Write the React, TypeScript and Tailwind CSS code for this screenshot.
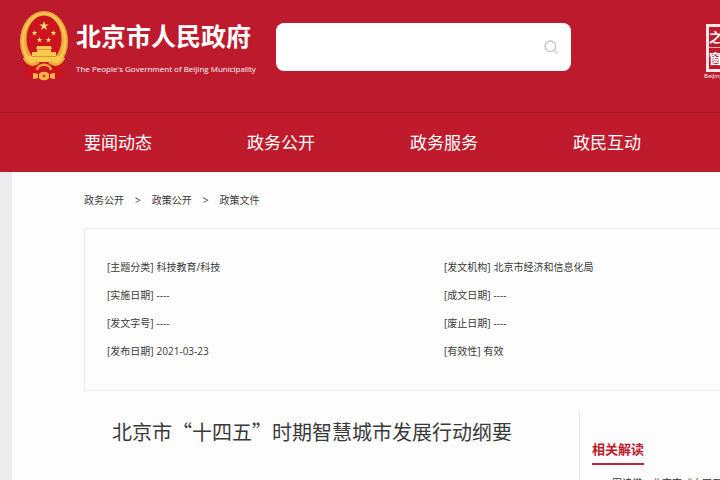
import { Search } from "lucide-react";

interface MetaItem {
  label: string;
  value: string;
}

const navItems = ["要闻动态", "政务公开", "政务服务", "政民互动"];

const crumbs = ["政务公开", "政策公开", "政策文件"];

const leftMeta: MetaItem[] = [
  { label: "主题分类", value: "科技教育/科技" },
  { label: "实施日期", value: "----" },
  { label: "发文字号", value: "----" },
  { label: "发布日期", value: "2021-03-23" },
];

const rightMeta: MetaItem[] = [
  { label: "发文机构", value: "北京市经济和信息化局" },
  { label: "成文日期", value: "----" },
  { label: "废止日期", value: "----" },
  { label: "有效性", value: "有效" },
];

function Star({ x, y, r }: { x: number; y: number; r: number }) {
  return (
    <path
      transform={`translate(${x} ${y}) scale(${r})`}
      fill="#f9d56b"
      d="M0-1 .24-.32.95-.31.38.12.59.81 0 .4-.59.81-.38.12-.95-.31-.24-.32Z"
    />
  );
}

function Emblem() {
  return (
    <svg viewBox="0 0 48 70" className="h-[70px] w-12 shrink-0" aria-hidden="true">
      {/* Wheat ring */}
      <ellipse cx="24" cy="30" rx="24" ry="30" fill="#eda83a" />
      <ellipse cx="24" cy="30" rx="21" ry="27" fill="none" stroke="#f6c653" strokeWidth="2.5" />
      <ellipse cx="24" cy="28" rx="17.5" ry="23.5" fill="#cb1420" />
      <Star x={24} y={15} r={5} />
      <Star x={14.5} y={22} r={3} />
      <Star x={33.5} y={22} r={3} />
      <Star x={19.5} y={29} r={3} />
      <Star x={28.5} y={29} r={3} />
      {/* Gate */}
      <path fill="#f9c84e" d="M17 35h14l1 3h-1v3h5v4h7c-1 5-3 8-6 9H11c-3-1-5-4-6-9h7v-4h5v-3h-1Z" />
      <path stroke="#d98a24" strokeWidth="0.8" d="M17 38.5h14M12 45.5h24" />
      {/* Ribbon and gear */}
      <path fill="#cb1420" d="M5 49c4 5 8 5 12 2h14c4 3 8 3 12-2l-1 17-5 2-6-3H17l-6 3-5-2Z" />
      <path fill="none" stroke="#eda83a" strokeWidth="2.5" d="M4 47c4 8 10 8 15 4M44 47c-4 8-10 8-15 4" />
      <path fill="none" stroke="#eda83a" strokeWidth="2.5" d="M17 59c1-7 13-7 14 0" />
      <path fill="#f3b848" d="m13 62 6 1c2-3 8-3 10 0l6-1v6l-6-1c-2 3-8 3-10 0l-6 1Z" />
      <path stroke="#cb1420" strokeWidth="1.2" d="M18.5 63v4M29.5 63v4" />
      <circle cx="24" cy="65" r="1.5" fill="#c9571d" />
    </svg>
  );
}

function MetaList({ items }: { items: MetaItem[] }) {
  return (
    <dl className="flex w-[337px] shrink-0 flex-col">
      {items.map((item) => (
        <div key={item.label} className="flex h-7 items-center gap-[3px]">
          <dt>[{item.label}]</dt>
          <dd>{item.value}</dd>
        </div>
      ))}
    </dl>
  );
}

export default function App() {
  return (
    <div className="flex h-screen flex-col overflow-hidden bg-[#edebee] font-['Open_Sans','Noto_Sans_CJK_SC',sans-serif] text-[#3a3a3a]">
      <header className="shrink-0 bg-[#bd1a2d] text-white">
        <div className="flex h-28 items-start pl-5">
          <a href="#" className="mt-[11px] flex shrink-0 gap-2">
            <Emblem />
            <span className="mt-1.5 flex flex-col">
              <span className="font-['Noto_Sans_CJK_SC',sans-serif] text-[25px] leading-9 font-bold whitespace-nowrap">
                北京市人民政府
              </span>
              <span className="text-[8px] leading-8 whitespace-nowrap">
                The People's Government of Beijing Municipality
              </span>
            </span>
          </a>
          <form className="mt-[23px] ml-5 flex h-12 w-[295px] shrink-0 items-center rounded-lg bg-white pr-3" role="search">
            <input
              type="search"
              aria-label="搜索"
              className="h-full min-w-0 flex-1 rounded-lg pl-3 text-sm text-[#3a3a3a] outline-none"
            />
            <button type="button" aria-label="搜索" className="text-[#c4c4c4]">
              <Search className="h-4 w-4" />
            </button>
          </form>
          <div className="mt-6 ml-auto w-4 shrink-0 whitespace-nowrap">
            <div className="ml-[2px] flex h-12 w-12 flex-col items-start border-3 border-[#f9e4e4] text-[13px] leading-5 font-bold">
              <span className="border-b border-[#f0b0b4]">之</span>
              <span>窗</span>
            </div>
            <span className="block text-[6px] leading-2">Beijing</span>
          </div>
        </div>

        <nav className="flex h-[60px] items-center overflow-hidden border-t border-[#a81525] bg-[#c01a2d] pl-[84px]">
          {navItems.map((item) => (
            <a key={item} href="#" className="w-[163px] shrink-0 text-[17px] leading-6">
              {item}
            </a>
          ))}
        </nav>
      </header>

      <main className="ml-3 flex-1 overflow-hidden bg-[#fdfdfd] pl-[72px]">
        <div className="flex h-14 items-center gap-[11px] text-[10px]">
          {crumbs.map((crumb, i) => (
            <div key={crumb} className="flex items-center gap-[11px]">
              {i > 0 && <span>&gt;</span>}
              <a href="#">{crumb}</a>
            </div>
          ))}
        </div>

        <section className="flex h-[163px] items-center border-y border-l border-[#ececf0] pl-[22px] text-[10px]">
          <MetaList items={leftMeta} />
          <MetaList items={rightMeta} />
        </section>

        <div className="mt-5 flex">
          <article className="flex-1">
            <h1 className="pt-[3px] pl-7 font-['Noto_Sans_CJK_SC',sans-serif] text-[20px] leading-9 whitespace-nowrap text-[#3a3a3a]">
              北京市“十四五”时期智慧城市发展行动纲要
            </h1>
          </article>
          <aside className="h-24 w-[141px] shrink-0 border-l border-[#e4e4e8] pt-6 pl-3">
            <h2 className="inline-block border-b-2 border-[#b02a38] text-[13px] leading-7 font-bold text-[#c0192b]">
              相关解读
            </h2>
            <ul className="mt-2.5 pl-2.5 font-['Noto_Sans_CJK_SC',sans-serif] text-[10px] whitespace-nowrap">
              <li>
                <a href="#">一图读懂：北京市“十四五”</a>
              </li>
            </ul>
          </aside>
        </div>
      </main>
    </div>
  );
}
